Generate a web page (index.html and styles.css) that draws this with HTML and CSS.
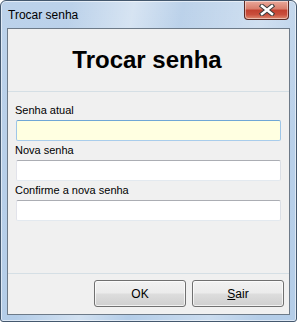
FILE: index.html
```html
<!DOCTYPE html>
<html lang="pt">
<head>
    <meta charset="UTF-8">
    <title>Trocar senha</title>
    <link rel="stylesheet" href="styles.css">
</head>
<body>
    <div class="window">
        <div class="title-bar">
            <span class="window-title">Trocar senha</span>
            <button class="close-button" aria-label="Fechar">
                <svg width="16" height="12" viewBox="0 0 16 12">
                    <path d="M3 2 L13 10 M13 2 L3 10" stroke="#3b3b3b" stroke-width="4.5" stroke-linecap="square" fill="none"/>
                    <path d="M3 2 L13 10 M13 2 L3 10" stroke="#ffffff" stroke-width="2.5" stroke-linecap="square" fill="none"/>
                </svg>
            </button>
        </div>

        <div class="client">
            <div class="dialog-header">
                <h1 class="dialog-heading">Trocar senha</h1>
            </div>

            <div class="dialog-form">
                <label class="field-label">Senha atual</label>
                <input class="field field-focused" type="password">
                <label class="field-label">Nova senha</label>
                <input class="field" type="password">
                <label class="field-label">Confirme a nova senha</label>
                <input class="field" type="password">
            </div>

            <div class="dialog-footer">
                <button class="dialog-button">OK</button>
                <button class="dialog-button"><u>S</u>air</button>
            </div>
        </div>
    </div>
</body>
</html>
```

FILE: styles.css
```css
* {
    margin: 0;
    padding: 0;
    box-sizing: border-box;
}

body {
    font-family: 'Liberation Sans', Arial, sans-serif;
    background: #ffffff;
    width: 297px;
    height: 322px;
    overflow: hidden;
}

/* Aero glass frame */
.window {
    width: 297px;
    height: 322px;
    border: 1px solid #44586e;
    border-radius: 6px 6px 3px 3px;
    padding: 0 6px 6px;
    display: flex;
    flex-direction: column;
    background:
        linear-gradient(100deg, rgba(255, 255, 255, 0) 20%, rgba(255, 255, 255, 0.4) 38%, rgba(255, 255, 255, 0) 52%, rgba(255, 255, 255, 0.3) 75%, rgba(255, 255, 255, 0) 90%),
        linear-gradient(180deg, #bcd2ea 0%, #b4cde8 100%);
    box-shadow: inset 0 0 0 1px rgba(255, 255, 255, 0.55);
}

.title-bar {
    height: 27px;
    display: flex;
    justify-content: space-between;
    align-items: flex-start;
}

.window-title {
    font-size: 12px;
    color: #000000;
    padding: 7px 0 0 1px;
    line-height: 15px;
}

.close-button {
    width: 45px;
    height: 19px;
    margin-right: 1px;
    border: 1px solid #5b2a24;
    border-top: none;
    border-radius: 0 0 4px 4px;
    background: linear-gradient(180deg, #e9a99b 0%, #d77c6a 45%, #c2402f 50%, #c94e3c 75%, #de8a70 100%);
    box-shadow: inset 0 0 0 1px rgba(255, 255, 255, 0.45);
    display: flex;
    align-items: center;
    justify-content: center;
}

.close-button svg {
    display: block;
}

.client {
    width: 283px;
    height: 287px;
    border: 1px solid #6d7a88;
    background: #f0f0f0;
    display: flex;
    flex-direction: column;
}

.dialog-header {
    height: 63px;
    border-bottom: 1px solid #d5dfe5;
    display: flex;
    align-items: center;
    justify-content: center;
}

.dialog-heading {
    font-size: 24px;
    font-weight: 700;
    line-height: 28px;
    color: #000000;
    margin-left: -3px;
}

.dialog-form {
    flex: 1;
    padding: 11px 8px 0;
    display: flex;
    flex-direction: column;
}

.field-label {
    font-size: 11px;
    line-height: 15px;
    color: #000000;
    margin: 0 0 2px -1px;
}

.field {
    width: 265px;
    height: 21px;
    border: 1px solid;
    border-color: #abadb3 #dbdfe6 #e3e9ef #e2e3ea;
    border-radius: 2px;
    background: #ffffff;
    margin-bottom: 2px;
    outline: none;
}

.field-focused {
    background: #ffffe1;
    border-color: #6fa6d6 #9ec6e8 #a9cdeb #9ec6e8;
}

.dialog-footer {
    height: 41px;
    border-top: 1px solid #d5dfe5;
    padding: 6px 5px 0 0;
    display: flex;
    justify-content: flex-end;
    align-items: flex-start;
    gap: 6px;
}

.dialog-button {
    width: 92px;
    height: 27px;
    border: 1px solid #707070;
    border-radius: 3px;
    background: linear-gradient(180deg, #f2f2f2 0%, #ebebeb 48%, #dddddd 52%, #cfcfcf 100%);
    box-shadow: inset 0 0 0 1px rgba(255, 255, 255, 0.7);
    font-family: 'Liberation Sans', Arial, sans-serif;
    font-size: 12px;
    color: #000000;
}
```
